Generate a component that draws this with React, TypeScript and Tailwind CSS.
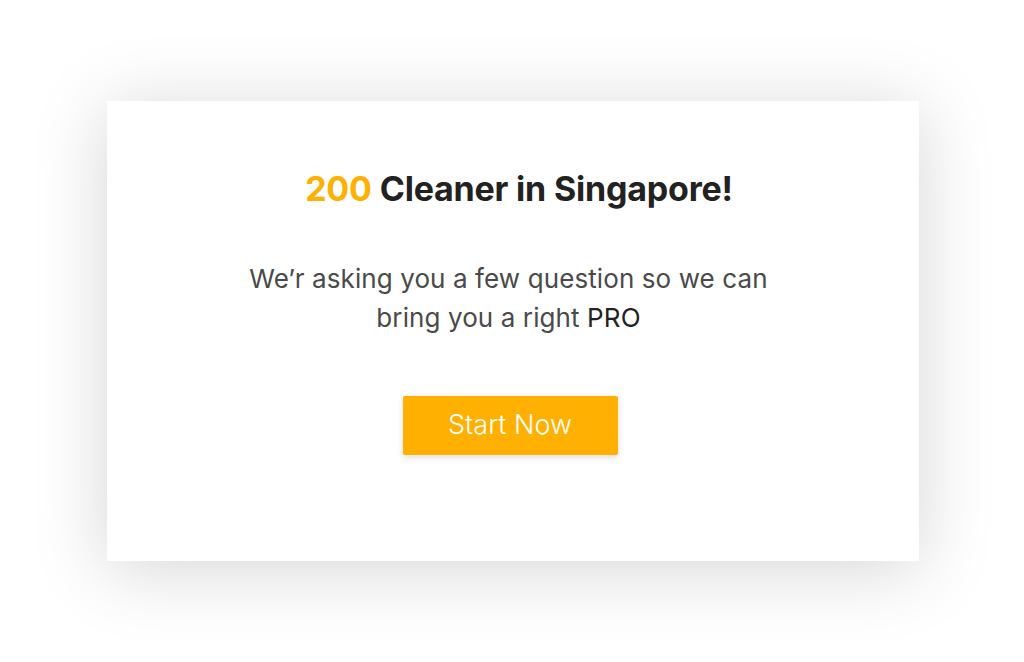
export default function App() {
  return (
    <div
      className="flex h-[662px] w-full items-center justify-center bg-white pl-[2px]"
      style={{ fontFamily: "Inter, 'Liberation Sans', sans-serif" }}
    >
      <div className="flex h-[460px] w-[812px] flex-col items-center bg-white pt-[65px] shadow-[0_8px_70px_rgba(0,0,0,0.17)]">
        <h1 className="ml-[12px] text-[34px] font-bold leading-[46px] tracking-[-0.2px] text-[#222222]">
          <span className="text-[#ffb000]">200</span> Cleaner in Singapore!
        </h1>

        <p className="mr-[9px] mt-[47px] text-center text-[26px] leading-[39px] tracking-[0.1px] text-[#4a4a4a]">
          We’r asking you a few question so we can
          <br />
          bring you a right <span className="text-[#222222]">PRO</span>
        </p>

        <button className="mr-[6px] mt-[59px] h-[59px] w-[215px] rounded-[2px] bg-[#ffb000] text-[27px] font-light text-white shadow-[0_2px_6px_rgba(0,0,0,0.15)]">
          Start Now
        </button>
      </div>
    </div>
  );
}
